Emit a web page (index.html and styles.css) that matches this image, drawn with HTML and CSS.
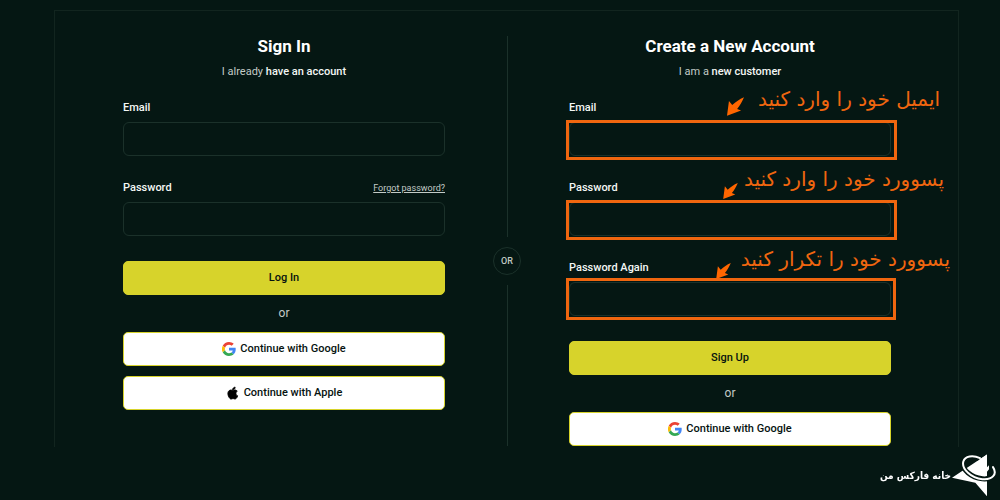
FILE: index.html
```html
<!DOCTYPE html>
<html lang="en">
<head>
<meta charset="utf-8">
<meta name="viewport" content="width=device-width, initial-scale=1">
<title>Sign In</title>
<link rel="stylesheet" href="styles.css">
</head>
<body>
<svg class="sprite" aria-hidden="true">
  <symbol id="google" viewBox="0 0 48 48">
    <path fill="#ea4335" d="M24 9.500c3.500 0 6.700 1.200 9.200 3.600l6.900-6.900C35.900 2.400 30.500 0 24 0 14.600 0 6.500 5.400 2.600 13.200l8 6.200C12.400 13.700 17.700 9.500 24 9.500z"/>
    <path fill="#4285f4" d="M47 24.600c0-1.600-.2-3.100-.4-4.600H24v9h12.900c-.6 3-2.200 5.500-4.700 7.200l7.700 6c4.500-4.200 7.100-10.400 7.100-17.600z"/>
    <path fill="#fbbc05" d="M10.500 28.600A14.500 14.500 0 0 1 10.500 19.400l-8-6.200a24 24 0 0 0 0 21.600z"/>
    <path fill="#34a853" d="M24 48c6.500 0 11.900-2.100 15.900-5.800l-7.700-6c-2.200 1.500-4.900 2.300-8.200 2.300-6.300 0-11.600-4.200-13.500-9.900l-8 6.200C6.500 42.600 14.600 48 24 48z"/>
  </symbol>
  <symbol id="apple" viewBox="2 1 21 22">
    <path d="M17.100 12.700c0-2.300 1.900-3.500 2-3.600-1.100-1.600-2.800-1.800-3.400-1.800-1.400-.2-2.800.8-3.500.8s-1.900-.8-3-.8C7.600 7.300 6.100 8.200 5.300 9.600c-1.700 2.900-.4 7.200 1.200 9.500.8 1.200 1.700 2.400 3 2.400 1.200 0 1.700-.8 3.100-.8 1.500 0 1.900.8 3.100.8s2.100-1.200 2.900-2.300c.9-1.300 1.300-2.600 1.300-2.700 0 0-2.800-1-2.800-3.800zM14.800 5.800c.6-.8 1.100-1.900 1-3-1 0-2.100.6-2.800 1.400-.6.7-1.200 1.800-1 2.900 1 .1 2.100-.5 2.800-1.300z" stroke="#000" stroke-width="1.500"/>
  </symbol>
  <symbol id="arrow" viewBox="0 0 52 57">
    <path fill="#f60" d="M0 57 6 12l10 12C27 14 38 6 52 0 46 14 40 25 31 36l12 5z"/>
  </symbol>
</svg>

<main class="card">
  <section class="panel">
    <h1 class="title">Sign In</h1>
    <p class="subtitle">I already <strong>have an account</strong></p>
    <form>
      <div class="field">
        <label for="login-email">Email</label>
        <input id="login-email" type="email">
      </div>
      <div class="field">
        <div class="label-row">
          <label for="login-password">Password</label>
          <a class="forgot" href="#">Forgot password?</a>
        </div>
        <input id="login-password" type="password">
      </div>
      <button class="button primary" type="submit">Log In</button>
      <p class="or">or</p>
      <div class="providers">
        <button class="button" type="button"><svg class="icon"><use href="#google"/></svg>Continue with Google</button>
        <button class="button" type="button"><svg class="icon"><use href="#apple"/></svg>Continue with Apple</button>
      </div>
    </form>
  </section>

  <div class="divider"><span class="badge">OR</span></div>

  <section class="panel">
    <h2 class="title">Create a New Account</h2>
    <p class="subtitle">I am a <strong>new customer</strong></p>
    <form>
      <div class="field marked">
        <label for="new-email">Email</label>
        <input id="new-email" type="email">
        <div class="hint hint-email"><span lang="fa" dir="rtl">ایمیل خود را وارد کنید</span><svg class="arrow large"><use href="#arrow"/></svg></div>
      </div>
      <div class="field marked">
        <label for="new-password">Password</label>
        <input id="new-password" type="password">
        <div class="hint hint-password"><span lang="fa" dir="rtl">پسوورد خود را وارد کنید</span><svg class="arrow"><use href="#arrow"/></svg></div>
      </div>
      <div class="field marked raised">
        <label for="new-repeat">Password Again</label>
        <input id="new-repeat" type="password">
        <div class="hint hint-repeat"><span lang="fa" dir="rtl">پسوورد خود را تکرار کنید</span><svg class="arrow"><use href="#arrow"/></svg></div>
      </div>
      <button class="button primary" type="submit">Sign Up</button>
      <p class="or">or</p>
      <button class="button" type="button"><svg class="icon"><use href="#google"/></svg>Continue with Google</button>
    </form>
  </section>
</main>

<div class="brand">
  <span lang="fa" dir="rtl">خانه فارکس من</span>
  <svg class="brand-mark" viewBox="0 0 135 128" aria-hidden="true">
    <path fill="#fff" d="M0 71 105 1v125L70 86z"/>
    <path fill="none" stroke="#051713" stroke-width="15" d="M84 14C62 4 39 8 34 24c-6 22 24 46 57 50 27 3 44-14 31-34"/>
    <path fill="#fff" d="M78 19 105 1v38l6-6v12L99 60z"/>
    <path fill="none" stroke="#fff" stroke-width="6" stroke-linecap="round" d="M84 12C62 2 39 6 34 22c-6 22 24 50 57 53 30 3 46-15 32-36"/>
  </svg>
</div>
</body>
</html>
```
FILE: styles.css
```css
* {
  box-sizing: border-box;
}

body {
  margin: 0;
  padding: 10px 41px 0 54px;
  background: #051713;
  color: #f4f7f5;
  font: 500 11px/20px Roboto, "Liberation Sans", sans-serif;
}

.sprite {
  display: none;
}

.card {
  display: grid;
  grid-template-columns: 1fr 124px 1fr;
  padding: 25px 67px 1px 68px;
  border: 1px solid #12251f;
  border-bottom: 0;
}

.title {
  margin: 0;
  font-size: 17px;
  font-weight: 700;
  line-height: 20px;
  text-align: center;
  color: #fff;
}

.subtitle {
  margin: 6px 0 16px;
  text-align: center;
  font-weight: 400;
  color: #c3cbc7;
}

.subtitle strong {
  font-weight: 500;
  color: #f4f7f5;
}

.field {
  position: relative;
  display: flex;
  flex-direction: column;
  gap: 4px;
  margin-bottom: 22px;
}

.label-row {
  display: flex;
  justify-content: space-between;
}

.forgot {
  color: #c3cbc7;
  font-size: 9px;
  font-weight: 400;
}

.field input {
  height: 34px;
  width: 100%;
  padding: 0 12px;
  border: 1px solid #1b312a;
  border-radius: 6px;
  background: transparent;
  color: inherit;
  font: inherit;
}

.button {
  display: flex;
  align-items: center;
  justify-content: center;
  gap: 4px;
  width: 100%;
  height: 34px;
  padding: 0;
  border: 1px solid #d7d32b;
  border-radius: 5px;
  background: #fff;
  color: #06120f;
  font: inherit;
}

.primary {
  margin-top: 25px;
  background: #d7d32b;
}

.or {
  margin: 8px 0 9px;
  text-align: center;
  font-size: 12px;
  font-weight: 400;
  color: #c3cbc7;
}

.providers {
  display: grid;
  gap: 10px;
}

.icon {
  width: 14px;
  height: 14px;
}

.divider {
  display: flex;
  flex-direction: column;
  align-items: center;
  gap: 10px;
}

.divider::before,
.divider::after {
  content: "";
  flex: 5;
  width: 1px;
  background: #1b312a;
}

.divider::after {
  flex: 4;
}

.badge {
  display: flex;
  align-items: center;
  justify-content: center;
  width: 28px;
  height: 28px;
  border: 1px solid #1b312a;
  border-radius: 50%;
  color: #c3cbc7;
  font-size: 9px;
}

.marked::after {
  content: "";
  position: absolute;
  inset: 22px -6px -4px -3px;
  border: 3px solid #f0660f;
  pointer-events: none;
}

.raised::after {
  inset: 20px -5px -4px -3px;
}

.hint {
  position: absolute;
  top: -13px;
  display: flex;
  flex-direction: row-reverse;
  align-items: flex-start;
  gap: 6px;
  height: 34px;
  color: #f0660f;
  font: 20px/28px "DejaVu Sans", sans-serif;
  white-space: nowrap;
}

.hint-email {
  right: -49px;
  gap: 14px;
  height: 31px;
}

.hint-password {
  right: -53px;
}

.hint-repeat {
  right: -59px;
  gap: 10px;
}

.arrow {
  align-self: flex-end;
  width: 15px;
  height: 16px;
}

.large {
  width: 17px;
  height: 19px;
}

.brand {
  position: fixed;
  right: 3px;
  bottom: 3px;
  display: flex;
  align-items: center;
  gap: 1px;
  color: #fff;
  font: bold 10px/20px "DejaVu Sans Condensed", "DejaVu Sans", sans-serif;
}

.brand-mark {
  width: 45px;
  height: 43px;
}
```
